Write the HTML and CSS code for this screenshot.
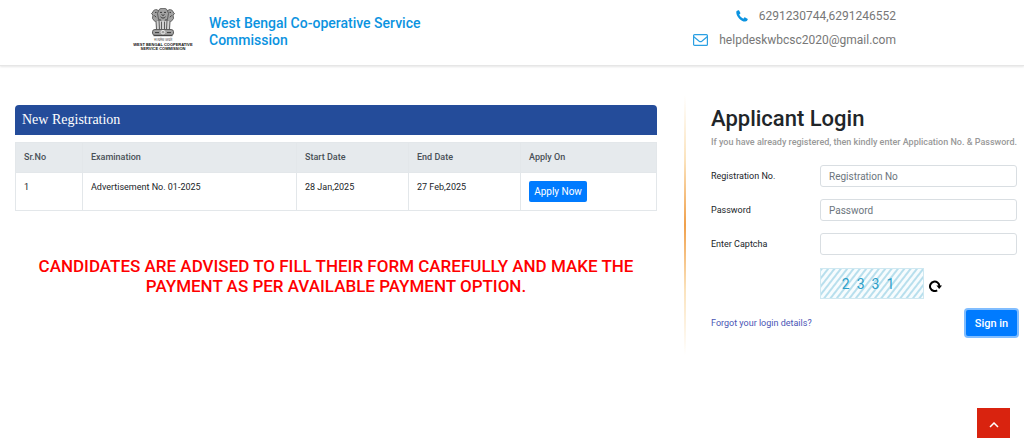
FILE: index.html
```html
<!DOCTYPE html>
<html lang="en">
<head>
    <meta charset="UTF-8">
    <meta name="viewport" content="width=device-width, initial-scale=1.0">
    <title>West Bengal Co-operative Service Commission</title>
    <link rel="stylesheet" href="styles.css">
</head>
<body>

<!-- Header -->
<header class="header">
    <div class="header-inner">
        <div class="logo">
            <svg class="emblem" viewBox="0 0 48 66" preserveAspectRatio="none" aria-hidden="true">
                <g fill="#a2a2a2" stroke="#555" stroke-width="2">
                    <path d="M12 4c-5-1-8 2-8 5l-3 4 3 3-1 8 5 7 8-2 2-20z"/>
                    <path d="M36 4c5-1 8 2 8 5l3 4-3 3 1 8-5 7-8-2-2-20z"/>
                    <path d="M16 4c4-5 12-5 16 0l3 8-2 14-4 6H19l-4-6-2-14z"/>
                    <path d="M9 29h30l-2 20H11z" fill="#d2d2d2" stroke="none"/>
                    <path d="M10 29l1 20M16 28l1 21M21 31v18M27 31v18M32 28l-1 21M38 29l-1 20" fill="none"/>
                    <rect x="3" y="49" width="42" height="13" rx="5"/>
                </g>
                <g fill="none" stroke="#333" stroke-width="2">
                    <path d="M18 10h4M26 10h4M21 15l3 2 3-2M19 20c3 4 7 4 10 0M8 10h3M37 10h3M7 17l3 4M41 17l-3 4M17 25l3 4M31 25l-3 4"/>
                    <circle cx="24" cy="55" r="4" stroke="#eee"/>
                    <path d="M8 56h8M32 56h8M5 63h38"/>
                </g>
            </svg>
            <span class="motto" lang="hi">सत्यमेव जयते</span>
            <span class="logo-text">WEST BENGAL COOPERATIVE<br>SERVICE COMMISSION</span>
        </div>
        <div class="site-name">West Bengal Co-operative Service Commission</div>
        <div class="contact">
            <div class="contact-item">
                <svg class="phone-icon" viewBox="0 0 12 12" aria-hidden="true"><path fill="#0b93e0" d="M.4 1.5C.6.8 1.6.4 2.3.2c.4-.1.6 0 .8.4l1.2 2.2c.2.4.1.7-.2 1l-.9.8c.7 1.7 2.3 3.3 4.1 4.1l.9-1c.3-.4.6-.4 1-.2l2.2 1.2c.4.2.4.5.3.9-.3 1.2-1.2 2-2.5 2C4.500 11.500-.4 5.500.4 1.500z"/></svg>
                <span>6291230744,6291246552</span>
            </div>
            <div class="contact-item">
                <svg class="mail-icon" viewBox="0 0 15 12" aria-hidden="true"><g fill="none" stroke="#2ba0e3" stroke-width="1.200"><rect x=".6" y=".6" width="13.800" height="10.800" rx="1"/><path d="M.8 2.800l5.400 4.400c.8.600 1.800.600 2.600 0l5.400-4.400"/></g></svg>
                <span>helpdeskwbcsc2020@gmail.com</span>
            </div>
        </div>
    </div>
</header>

<main class="main">
    <!-- New Registration -->
    <section class="registration">
        <h2 class="panel-title">New Registration</h2>
        <table class="exam-table">
            <thead>
                <tr>
                    <th class="col-no">Sr.No</th>
                    <th>Examination</th>
                    <th class="col-date">Start Date</th>
                    <th class="col-date">End Date</th>
                    <th class="col-apply">Apply On</th>
                </tr>
            </thead>
            <tbody>
                <tr>
                    <td>1</td>
                    <td>Advertisement No. 01-2025</td>
                    <td>28 Jan,2025</td>
                    <td>27 Feb,2025</td>
                    <td><button type="button" class="btn btn-apply">Apply Now</button></td>
                </tr>
            </tbody>
        </table>
        <p class="notice">CANDIDATES ARE ADVISED TO FILL THEIR FORM CAREFULLY AND MAKE THE PAYMENT AS PER AVAILABLE PAYMENT OPTION.</p>
    </section>

    <div class="divider"></div>

    <!-- Applicant Login -->
    <section class="login">
        <h1>Applicant Login</h1>
        <p class="hint">If you have already registered, then kindly enter Application No. &amp; Password.</p>
        <form>
            <div class="form-row">
                <label for="regno">Registration No.</label>
                <input type="text" id="regno" placeholder="Registration No">
            </div>
            <div class="form-row">
                <label for="password">Password</label>
                <input type="password" id="password" placeholder="Password">
            </div>
            <div class="form-row">
                <label for="captcha">Enter Captcha</label>
                <input type="text" id="captcha">
            </div>
            <div class="captcha-row">
                <div class="captcha"><span>2</span><span>3</span><span>3</span><span>1</span></div>
                <button type="button" class="refresh" aria-label="Refresh captcha">
                    <svg viewBox="0 0 13 12" aria-hidden="true"><path d="M8.200 10.300A4.700 4.700 0 1 1 10.400 6" fill="none" stroke="#000" stroke-width="2"/><path d="M7.400 5.400H13L10.200 9z"/></svg>
                </button>
            </div>
            <div class="form-footer">
                <a href="#">Forgot your login details?</a>
                <button type="submit" class="btn btn-signin">Sign in</button>
            </div>
        </form>
    </section>
</main>

<a href="#" class="to-top" aria-label="Back to top">
    <svg viewBox="0 0 10 6" aria-hidden="true"><path d="M1 5l4-4 4 4" fill="none" stroke="#fff" stroke-width="1.500"/></svg>
</a>

</body>
</html>
```
FILE: styles.css
```css
* {
    box-sizing: border-box;
}
body {
    margin: 0;
    font-family: Roboto, "Liberation Sans", sans-serif;
    font-size: 9px;
    color: #212529;
    background: #fff;
}
h1, h2, p {
    margin: 0;
}
input, button {
    font-family: inherit;
}

/* header */
.header {
    border-bottom: 1px solid #e6e6e6;
    box-shadow: 0 1px 2px #e6e6e6;
}
.header-inner {
    display: flex;
    align-items: flex-start;
    width: 75%;
    min-height: 65px;
    margin: 0 auto;
    padding-top: 8px;
}
.logo {
    display: flex;
    flex-direction: column;
    align-items: center;
    width: 70px;
    margin-right: 11px;
}
.emblem {
    width: 24px;
    height: 29px;
}
.motto {
    font-size: 4px;
    line-height: 6px;
    color: #444;
}
.logo-text {
    font-family: "Liberation Sans", sans-serif;
    font-size: 4px;
    font-weight: bold;
    line-height: 4px;
    text-align: center;
    white-space: nowrap;
    color: #111;
}
.site-name {
    width: 240px;
    padding-top: 7px;
    font-size: 14px;
    font-weight: 500;
    line-height: 17px;
    color: #0b93e0;
}
.contact {
    margin-left: auto;
    font-size: 12px;
    line-height: 16px;
    color: #777;
}
.contact-item {
    display: flex;
    align-items: center;
    justify-content: flex-end;
    gap: 11px;
    margin-bottom: 8px;
}
.phone-icon {
    width: 12px;
    height: 12px;
}
.mail-icon {
    width: 15px;
    height: 12px;
}

/* content */
.main {
    display: flex;
    padding: 29px 7px 0 15px;
}
.registration {
    flex: 1;
    padding-top: 10px;
}
.panel-title {
    padding: 0 7px;
    font-family: "Liberation Serif", serif;
    font-size: 14px;
    font-weight: normal;
    line-height: 30px;
    color: #fff;
    background: #244c9a;
    border-radius: 4px 4px 0 0;
}
.exam-table {
    width: 100%;
    margin-top: 7px;
    table-layout: fixed;
    border-collapse: collapse;
}
.exam-table th,
.exam-table td {
    padding: 8px;
    border: 1px solid #e3e7ea;
    line-height: 13px;
    text-align: left;
    vertical-align: top;
}
.exam-table th {
    font-weight: 500;
    color: #495057;
    background: #e6eaed;
}
.exam-table .col-no {
    width: 67px;
}
.exam-table .col-date {
    width: 112px;
}
.exam-table .col-apply {
    width: 136px;
}
.btn {
    display: block;
    padding: 0;
    color: #fff;
    background: #007bff;
    border: 0;
    border-radius: 2px;
    cursor: pointer;
}
.btn-apply {
    width: 58px;
    height: 21px;
    font-size: 10px;
}
.notice {
    margin-top: 45px;
    padding: 0 20px;
    font-size: 17px;
    font-weight: 500;
    line-height: 20px;
    text-align: center;
    color: #f00;
}
.divider {
    width: 2px;
    height: 260px;
    margin: 0 25px 0 27px;
    background: linear-gradient(#fff, #fbe3bd 25%, #f0a04b 50%, #fbe3bd 75%, #fff);
}

/* login */
.login {
    width: 306px;
}
.login h1 {
    padding-top: 9px;
    font-size: 22px;
    font-weight: 500;
    line-height: 30px;
}
.hint {
    margin-bottom: 15px;
    font-weight: 500;
    line-height: 16px;
    white-space: nowrap;
    color: #999;
}
.form-row {
    display: flex;
    align-items: center;
    margin-bottom: 12px;
}
.form-row label {
    width: 109px;
}
.form-row input {
    flex: 1;
    min-width: 0;
    height: 22px;
    padding: 0 8px;
    font-size: 10px;
    color: #495057;
    border: 1px solid #d9dee2;
    border-radius: 3px;
}
.form-row input::placeholder {
    color: #6c757d;
}
.captcha-row {
    display: flex;
    align-items: center;
    gap: 5px;
    margin-top: 13px;
    padding-left: 109px;
}
.captcha {
    display: flex;
    justify-content: center;
    gap: 7px;
    width: 104px;
    height: 31px;
    padding-right: 8px;
    font-size: 14px;
    line-height: 30px;
    color: #2d9fc9;
    background: repeating-linear-gradient(128deg, #b8dfed 0 1px, #f7fcfe 2px 4px, #b8dfed 5px);
    border: 1px solid #cfe8f1;
}
.refresh {
    width: 13px;
    height: 12px;
    margin-top: 4px;
    padding: 0;
    background: none;
    border: 0;
    cursor: pointer;
}
.refresh svg {
    display: block;
}
.form-footer {
    display: flex;
    align-items: center;
    justify-content: space-between;
    margin-top: 11px;
}
.form-footer a {
    color: #4a55b5;
    text-decoration: none;
}
.btn-signin {
    width: 51px;
    height: 26px;
    font-size: 11px;
    font-weight: 500;
    box-shadow: 0 0 0 2px #80bdff;
}

.to-top {
    position: fixed;
    right: 14px;
    bottom: 0;
    display: flex;
    align-items: center;
    justify-content: center;
    width: 33px;
    height: 30px;
    padding-top: 4px;
    background: #d9230f;
}
.to-top svg {
    width: 10px;
    height: 6px;
}
```
